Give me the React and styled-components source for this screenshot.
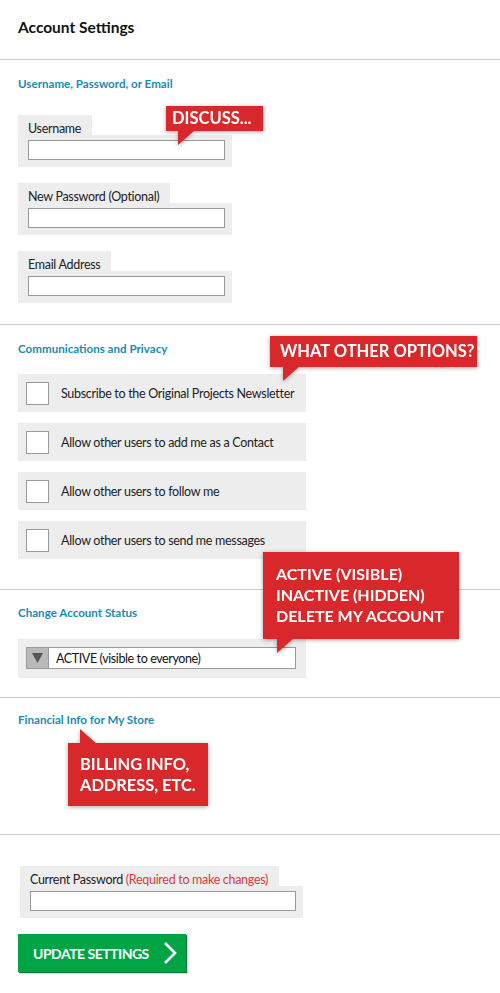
import React from "react";
import styled, { createGlobalStyle } from "styled-components";

const GlobalStyle = createGlobalStyle`
  html, body {
    margin: 0;
    padding: 0;
    background: #fff;
  }
  body {
    font-family: Lato, "Open Sans", "Liberation Sans", sans-serif;
    color: #222;
  }
`;

const Page = styled.div`
  position: relative;
  width: 500px;
  min-height: 993px;
  background: #fff;
`;

const Header = styled.div`
  height: 59px;
  display: flex;
  align-items: center;
  padding-left: 18px;
  border-bottom: 1px solid #cacaca;
`;

const Title = styled.h1`
  margin: 0;
  font-size: 15.5px;
  font-weight: 700;
  color: #111;
  padding-bottom: 6px;
`;

const Section = styled.div`
  position: relative;
  padding: ${(p) => p.$pad || "17px 0 20px 18px"};
  min-height: ${(p) => p.$minHeight || "auto"};
  border-bottom: ${(p) => (p.$last ? "none" : "1px solid #cacaca")};
  box-sizing: border-box;
`;

const SectionTitle = styled.h2`
  margin: 0 0 ${(p) => p.$gap || "25px"};
  font-size: 11.6px;
  line-height: 14px;
  font-weight: 700;
  color: #1a8bb3;
`;

const FieldList = styled.div`
  display: flex;
  flex-direction: column;
  gap: 16px;
`;

const FieldGroup = styled.div`
  display: flex;
  flex-direction: column;
  align-items: flex-start;
  width: ${(p) => p.$width || "214px"};
  margin-left: ${(p) => p.$offset || "0"};
`;

const Tab = styled.div`
  height: 20px;
  padding: 6px 11px 0 10px;
  box-sizing: border-box;
  background: #ededed;
  font-size: 12.5px;
  letter-spacing: -0.3px;
  line-height: 16px;
  color: #222;
  white-space: nowrap;
`;

const Required = styled.span`
  color: #e0393e;
`;

const FieldBox = styled.div`
  align-self: stretch;
  background: #ededed;
  padding: 5px 7px 7px 10px;
`;

const TextInput = styled.input`
  display: block;
  width: 100%;
  height: 20px;
  box-sizing: border-box;
  border: 1px solid #999;
  background: #fff;
  padding: 0 4px;
  outline: none;
`;

const OptionList = styled.div`
  display: flex;
  flex-direction: column;
  gap: 11px;
`;

const OptionRow = styled.label`
  display: flex;
  align-items: center;
  gap: 12px;
  width: 288px;
  height: 38px;
  box-sizing: border-box;
  padding-left: 8px;
  background: #ededed;
  font-size: 12.5px;
  letter-spacing: -0.3px;
  white-space: nowrap;
  color: #222;
`;

const Checkbox = styled.span`
  width: 23px;
  height: 23px;
  box-sizing: border-box;
  border: 1px solid #9a9a9a;
  background: #fff;
  flex-shrink: 0;
`;

const SelectWrap = styled.div`
  width: 288px;
  height: 39px;
  box-sizing: border-box;
  background: #ededed;
  padding: 8px 10px 9px 8px;
`;

const Select = styled.div`
  display: flex;
  align-items: center;
  height: 22px;
  box-sizing: border-box;
  border: 1px solid #999;
  background: #fff;
  font-size: 12.5px;
  letter-spacing: -0.4px;
  color: #111;
`;

const SelectArrow = styled.span`
  width: 21px;
  height: 100%;
  display: flex;
  align-items: center;
  justify-content: center;
  background: #b9b9b9;
  border-right: 1px solid #999;
  margin-right: 7px;
`;

const Button = styled.button`
  display: flex;
  align-items: center;
  gap: 14px;
  width: 168px;
  height: 38px;
  margin-top: 16px;
  padding: 0 0 0 15px;
  border: none;
  background: #00a445;
  box-shadow: 1px 1px 0 #0b7d38, 2px 2px 1px rgba(0, 0, 0, 0.15);
  color: #fff;
  font-family: Lato, "Open Sans", "Liberation Sans", sans-serif;
  font-size: 14px;
  letter-spacing: -0.5px;
  font-weight: 700;
  white-space: nowrap;
  cursor: pointer;
`;

const Callout = styled.div`
  position: absolute;
  left: ${(p) => p.$x}px;
  top: ${(p) => p.$y}px;
  width: ${(p) => p.$w}px;
  height: ${(p) => p.$h}px;
  box-sizing: border-box;
  padding: ${(p) => p.$pad || "0 0 0 6px"};
  background: #d9282b;
  color: #fff;
  font-size: ${(p) => p.$size || 15}px;
  line-height: ${(p) => p.$lh || 24}px;
  font-weight: 700;
  white-space: nowrap;
  filter: drop-shadow(0 1px 2px rgba(0, 0, 0, 0.35));
  z-index: 2;

  &::after {
    content: "";
    position: absolute;
    left: ${(p) => p.$tailX}px;
    width: 17px;
    height: 15px;
    background: #d9282b;
    ${(p) =>
      p.$up
        ? `top: -14px; clip-path: polygon(0 0, 0 100%, 100% 100%);`
        : `bottom: -14px; clip-path: polygon(0 0, 100% 0, 0 100%);`}
  }
`;

const fields = ["Username", "New Password (Optional)", "Email Address"];

const options = [
  "Subscribe to the Original Projects Newsletter",
  "Allow other users to add me as a Contact",
  "Allow other users to follow me",
  "Allow other users to send me messages",
];

export default function App() {
  return (
    <Page>
      <GlobalStyle />
      <Header>
        <Title>Account Settings</Title>
      </Header>

      <Section $pad="17px 0 21px 18px">
        <SectionTitle $gap="24px">Username, Password, or Email</SectionTitle>
        <FieldList>
          {fields.map((f) => (
            <FieldGroup key={f}>
              <Tab>{f}</Tab>
              <FieldBox>
                <TextInput type="text" />
              </FieldBox>
            </FieldGroup>
          ))}
        </FieldList>
        <Callout $x={166} $y={46} $w={97} $h={25} $lh={25} $size={16.5} $tailX={12}>
          DISCUSS...
        </Callout>
      </Section>

      <Section $pad="17px 0 30px 18px">
        <SectionTitle $gap="18px">Communications and Privacy</SectionTitle>
        <OptionList>
          {options.map((o) => (
            <OptionRow key={o}>
              <Checkbox />
              {o}
            </OptionRow>
          ))}
        </OptionList>
        <Callout
          $x={270}
          $y={11}
          $w={207}
          $h={31}
          $lh={31}
          $size={16.5}
          $pad="0 0 0 10px"
          $tailX={13}
        >
          WHAT OTHER OPTIONS?
        </Callout>
      </Section>

      <Section $pad="16px 0 19px 18px">
        <SectionTitle $gap="19px">Change Account Status</SectionTitle>
        <SelectWrap>
          <Select>
            <SelectArrow>
              <svg width="11" height="10" viewBox="0 0 11 10">
                <polygon points="0,0 11,0 5.5,10" fill="#555" />
              </svg>
            </SelectArrow>
            ACTIVE (visible to everyone)
          </Select>
        </SelectWrap>
        <Callout
          $x={263}
          $y={-38}
          $w={196}
          $h={87}
          $size={16}
          $lh={21}
          $pad="11px 0 0 13px"
          $tailX={14}
        >
          ACTIVE (VISIBLE)
          <br />
          INACTIVE (HIDDEN)
          <br />
          DELETE MY ACCOUNT
        </Callout>
      </Section>

      <Section $pad="15px 0 0 18px" $minHeight="137px">
        <SectionTitle>Financial Info for My Store</SectionTitle>
        <Callout
          $x={68}
          $y={45}
          $w={140}
          $h={63}
          $size={16.4}
          $lh={21}
          $pad="10px 0 0 12px"
          $tailX={12}
          $up
        >
          BILLING INFO,
          <br />
          ADDRESS, ETC.
        </Callout>
      </Section>

      <Section $pad="31px 0 0 18px" $last>
        <FieldGroup $width="283px" $offset="2px">
          <Tab>
            Current Password <Required>(Required to make changes)</Required>
          </Tab>
          <FieldBox>
            <TextInput type="password" />
          </FieldBox>
        </FieldGroup>
        <Button type="button">
          UPDATE SETTINGS
          <svg width="14" height="24" viewBox="0 0 14 24">
            <polyline
              points="2,2 12,12 2,22"
              fill="none"
              stroke="#fff"
              strokeWidth="2.6"
            />
          </svg>
        </Button>
      </Section>
    </Page>
  );
}
